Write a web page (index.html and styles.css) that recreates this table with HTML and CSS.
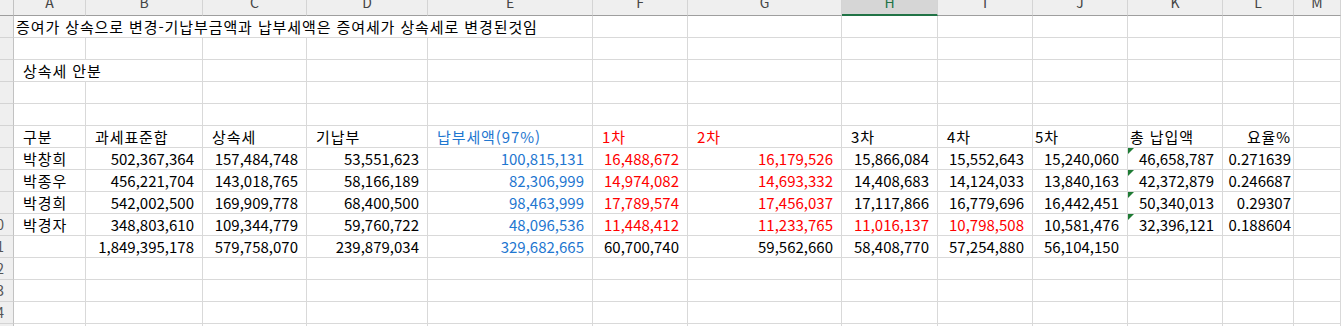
FILE: index.html
```html
<!DOCTYPE html>
<html lang="ko">
  <head>
    <meta charset="UTF-8" />
    <title>상속세 안분</title>
    <link rel="stylesheet" href="styles.css">
  </head>
  <body>
    <div class="sheet">
      <div class="row head">
        <div class="rh"></div>
        <div class="ch"><span>A</span></div><div class="ch"><span>B</span></div><div class="ch"><span>C</span></div>
        <div class="ch"><span>D</span></div><div class="ch"><span>E</span></div><div class="ch"><span>F</span></div>
        <div class="ch"><span>G</span></div><div class="ch sel"><span>H</span></div><div class="ch"><span>I</span></div>
        <div class="ch"><span>J</span></div><div class="ch"><span>K</span></div><div class="ch"><span>L</span></div>
        <div class="ch"><span>M</span></div>
      </div>

      <div class="row">
        <div class="rh"></div>
        <div class="c k spill span5">증여가 상속으로 변경-기납부금액과 납부세액은 증여세가 상속세로 변경된것임</div>
        <div class="c"></div><div class="c"></div><div class="c"></div><div class="c"></div>
        <div class="c"></div><div class="c"></div><div class="c"></div><div class="c"></div>
      </div>

      <div class="row">
        <div class="rh"></div>
        <div class="c"></div><div class="c"></div><div class="c"></div><div class="c"></div><div class="c"></div><div class="c"></div>
        <div class="c"></div><div class="c"></div><div class="c"></div><div class="c"></div><div class="c"></div><div class="c"></div><div class="c"></div>
      </div>

      <div class="row">
        <div class="rh"></div>
        <div class="c k ind spill span2">상속세 안분</div>
        <div class="c"></div><div class="c"></div><div class="c"></div><div class="c"></div><div class="c"></div><div class="c"></div>
        <div class="c"></div><div class="c"></div><div class="c"></div><div class="c"></div><div class="c"></div>
      </div>

      <div class="row">
        <div class="rh"></div>
        <div class="c"></div><div class="c"></div><div class="c"></div><div class="c"></div><div class="c"></div><div class="c"></div>
        <div class="c"></div><div class="c"></div><div class="c"></div><div class="c"></div><div class="c"></div><div class="c"></div><div class="c"></div>
      </div>

      <div class="row">
        <div class="rh"></div>
        <div class="c"></div><div class="c"></div><div class="c"></div><div class="c"></div><div class="c"></div><div class="c"></div>
        <div class="c"></div><div class="c"></div><div class="c"></div><div class="c"></div><div class="c"></div><div class="c"></div><div class="c"></div>
      </div>

      <div class="row">
        <div class="rh"></div>
        <div class="c k ind">구분</div>
        <div class="c k ind">과세표준합</div>
        <div class="c k ind">상속세</div>
        <div class="c k ind">기납부</div>
        <div class="c k ind blue">납부세액(97%)</div>
        <div class="c k ind red">1차</div>
        <div class="c k ind red">2차</div>
        <div class="c k ind">3차</div>
        <div class="c k ind">4차</div>
        <div class="c k">5차</div>
        <div class="c k">총 납입액</div>
        <div class="c k rt">요율%</div>
        <div class="c"></div>
      </div>

      <div class="row">
        <div class="rh"></div>
        <div class="c k ind">박창희</div>
        <div class="c num">502,367,364</div>
        <div class="c num">157,484,748</div>
        <div class="c num">53,551,623</div>
        <div class="c num blue">100,815,131</div>
        <div class="c num red">16,488,672</div>
        <div class="c num red">16,179,526</div>
        <div class="c num">15,866,084</div>
        <div class="c num">15,552,643</div>
        <div class="c num">15,240,060</div>
        <div class="c num warn">46,658,787</div>
        <div class="c rt">0.271639</div>
        <div class="c"></div>
      </div>

      <div class="row">
        <div class="rh"></div>
        <div class="c k ind">박종우</div>
        <div class="c num">456,221,704</div>
        <div class="c num">143,018,765</div>
        <div class="c num">58,166,189</div>
        <div class="c num blue">82,306,999</div>
        <div class="c num red">14,974,082</div>
        <div class="c num red">14,693,332</div>
        <div class="c num">14,408,683</div>
        <div class="c num">14,124,033</div>
        <div class="c num">13,840,163</div>
        <div class="c num warn">42,372,879</div>
        <div class="c rt">0.246687</div>
        <div class="c"></div>
      </div>

      <div class="row">
        <div class="rh"></div>
        <div class="c k ind">박경희</div>
        <div class="c num">542,002,500</div>
        <div class="c num">169,909,778</div>
        <div class="c num">68,400,500</div>
        <div class="c num blue">98,463,999</div>
        <div class="c num red">17,789,574</div>
        <div class="c num red">17,456,037</div>
        <div class="c num">17,117,866</div>
        <div class="c num">16,779,696</div>
        <div class="c num">16,442,451</div>
        <div class="c num warn">50,340,013</div>
        <div class="c rt">0.29307</div>
        <div class="c"></div>
      </div>

      <div class="row">
        <div class="rh"><span>10</span></div>
        <div class="c k ind">박경자</div>
        <div class="c num">348,803,610</div>
        <div class="c num">109,344,779</div>
        <div class="c num">59,760,722</div>
        <div class="c num blue">48,096,536</div>
        <div class="c num red">11,448,412</div>
        <div class="c num red">11,233,765</div>
        <div class="c num red">11,016,137</div>
        <div class="c num red">10,798,508</div>
        <div class="c num">10,581,476</div>
        <div class="c num warn">32,396,121</div>
        <div class="c rt">0.188604</div>
        <div class="c"></div>
      </div>

      <div class="row">
        <div class="rh"><span>11</span></div>
        <div class="c"></div>
        <div class="c num">1,849,395,178</div>
        <div class="c num">579,758,070</div>
        <div class="c num">239,879,034</div>
        <div class="c num blue">329,682,665</div>
        <div class="c num">60,700,740</div>
        <div class="c num">59,562,660</div>
        <div class="c num">58,408,770</div>
        <div class="c num">57,254,880</div>
        <div class="c num">56,104,150</div>
        <div class="c"></div>
        <div class="c"></div>
        <div class="c"></div>
      </div>

      <div class="row">
        <div class="rh"><span>12</span></div>
        <div class="c"></div><div class="c"></div><div class="c"></div><div class="c"></div><div class="c"></div><div class="c"></div>
        <div class="c"></div><div class="c"></div><div class="c"></div><div class="c"></div><div class="c"></div><div class="c"></div><div class="c"></div>
      </div>

      <div class="row">
        <div class="rh"><span>13</span></div>
        <div class="c"></div><div class="c"></div><div class="c"></div><div class="c"></div><div class="c"></div><div class="c"></div>
        <div class="c"></div><div class="c"></div><div class="c"></div><div class="c"></div><div class="c"></div><div class="c"></div><div class="c"></div>
      </div>

      <div class="row">
        <div class="rh"><span>14</span></div>
        <div class="c"></div><div class="c"></div><div class="c"></div><div class="c"></div><div class="c"></div><div class="c"></div>
        <div class="c"></div><div class="c"></div><div class="c"></div><div class="c"></div><div class="c"></div><div class="c"></div><div class="c"></div>
      </div>

      <div class="row">
        <div class="rh"></div>
        <div class="c"></div><div class="c"></div><div class="c"></div><div class="c"></div><div class="c"></div><div class="c"></div>
        <div class="c"></div><div class="c"></div><div class="c"></div><div class="c"></div><div class="c"></div><div class="c"></div><div class="c"></div>
      </div>
    </div>
  </body>
</html>
```

FILE: styles.css
```css
html, body {
  margin: 0;
  background: #fff;
}
body {
  font-family: "Noto Sans CJK KR", "Noto Sans", sans-serif;
  font-size: 15px;
  color: #000;
}
.sheet {
  width: 1341px;
  height: 326px;
  overflow: hidden;
}
.row {
  display: grid;
  grid-template-columns: 14px 72px 117px 104px 121px 165px 95px 154px 96px 95px 95px 95px 71px 47px;
  height: 22px;
}
.row.head {
  height: 16px;
}
.rh {
  box-sizing: border-box;
  background: #efefef;
  border-right: 1px solid #c2c2c2;
  border-bottom: 1px solid #d4d4d4;
  display: flex;
  justify-content: flex-end;
  overflow: hidden;
  padding-right: 9px;
  font-size: 14px;
  line-height: 21px;
  color: #555;
}
.head .rh {
  border-bottom: 1px solid #9e9e9e;
}
.ch {
  box-sizing: border-box;
  background: #efefef;
  border-right: 1px solid #d4d4d4;
  border-bottom: 1px solid #9e9e9e;
  overflow: hidden;
  text-align: center;
  font-size: 14px;
  line-height: 16px;
  color: #444;
}
.ch span {
  display: block;
  margin-top: -6px;
}
.ch.sel {
  background: #d6d6d6;
  border-bottom: 2px solid #217346;
  color: #217346;
}
.c {
  box-sizing: border-box;
  border-right: 1px solid #d9d9d9;
  border-bottom: 1px solid #d9d9d9;
  line-height: 21px;
  white-space: nowrap;
  overflow: hidden;
  padding: 0 2px;
}
.k {
  letter-spacing: 0.9px;
}
.spill {
  overflow: visible;
}
.span5 {
  grid-column: span 5;
}
.span2 {
  grid-column: span 2;
}
.ind {
  padding-left: 9px;
}
.num {
  text-align: right;
  padding-right: 8px;
}
.rt {
  text-align: right;
}
.blue {
  color: #1f77d0;
}
.red {
  color: #ff0000;
}
.warn {
  position: relative;
}
.warn::before {
  content: "";
  position: absolute;
  top: 0;
  left: 0;
  border-top: 6px solid #1e7b34;
  border-right: 6px solid transparent;
}
```
